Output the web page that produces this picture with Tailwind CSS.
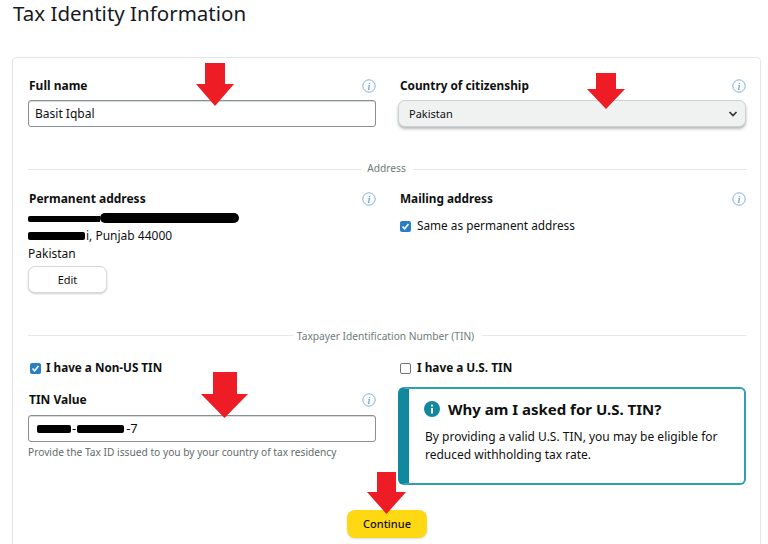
<!DOCTYPE html>
<html lang="en">
<head>
  <meta charset="UTF-8" />
  <title>Tax Identity Information</title>
  <script src="https://cdn.jsdelivr.net/npm/@tailwindcss/browser@4"></script>
</head>
<body class="bg-white text-[#0f1111] font-['Noto_Sans',sans-serif] overflow-hidden">
  <div class="relative h-[544px] w-[768px] overflow-hidden">
    <h1 class="pl-[13px] h-[57px] text-[20.5px] leading-[27px] text-[#16191f]">Tax Identity Information</h1>

    <div class="ml-[12px] w-[749px] h-[520px] border border-[#e4e6e6] rounded-[4px] pl-[15px] pr-[13px] pt-[19px]">
      <!-- name + country -->
      <div class="grid grid-cols-[348px_348px] gap-x-[22px]">
        <div>
          <div class="flex justify-between items-center h-[18px] pl-[1px]">
            <span class="text-[12px] font-bold">Full name</span>
            <svg class="w-[14px] h-[14px]" viewBox="0 0 14 14" fill="none"><circle cx="7" cy="7" r="6.2" stroke="#7fb2dc"/><text x="7" y="10.5" text-anchor="middle" font-size="10" font-style="italic" font-family="Liberation Serif" fill="#2f78ac">i</text></svg>
          </div>
          <div class="mt-[5px] h-[27px] border border-[#8a8f94] rounded-[3px] shadow-[inset_0_1px_1px_#d5d9d9] px-[6px] text-[12px] leading-[26px]">Basit Iqbal</div>
        </div>
        <div>
          <div class="flex justify-between items-center h-[18px] pl-[2px]">
            <span class="text-[11.8px] font-bold">Country of citizenship</span>
            <svg class="w-[14px] h-[14px]" viewBox="0 0 14 14" fill="none"><circle cx="7" cy="7" r="6.2" stroke="#7fb2dc"/><text x="7" y="10.5" text-anchor="middle" font-size="10" font-style="italic" font-family="Liberation Serif" fill="#2f78ac">i</text></svg>
          </div>
          <div class="mt-[5px] h-[27px] border border-[#c9d3d8] rounded-[7px] bg-[#f0f2f2] shadow-[0_2px_3px_rgba(15,17,17,0.3)] pl-[10px] pr-[7px] text-[11px] leading-[26px] flex justify-between items-center">
            <span>Pakistan</span>
            <svg class="w-[10px] h-[8px]" viewBox="0 0 10 8" fill="none"><path d="M1.5 2 L5 5.5 L8.5 2" stroke="#333" stroke-width="1.7"/></svg>
          </div>
        </div>
      </div>

      <!-- address divider -->
      <div class="mt-[33px] flex items-center gap-[6px] h-[18px]">
        <div class="flex-1 border-t border-[#e7e9e9]"></div>
        <span class="text-[10.2px] text-[#6f7b7b] -translate-x-[1px]">Address</span>
        <div class="flex-1 border-t border-[#e7e9e9]"></div>
      </div>

      <!-- addresses -->
      <div class="mt-[12px] grid grid-cols-[348px_348px] gap-x-[22px] h-[136px]">
        <div>
          <div class="flex justify-between items-center h-[18px] pl-[1px]">
            <span class="text-[12px] font-bold">Permanent address</span>
            <svg class="w-[14px] h-[14px]" viewBox="0 0 14 14" fill="none"><circle cx="7" cy="7" r="6.2" stroke="#7fb2dc"/><text x="7" y="10.5" text-anchor="middle" font-size="10" font-style="italic" font-family="Liberation Serif" fill="#2f78ac">i</text></svg>
          </div>
          <div class="mt-[1px] text-[12px] leading-[18px]">
            <div class="h-[18px] flex items-center"><span class="block w-[72px] h-[6px] mt-[2px] bg-black rounded-l-[2px]"></span><span class="block w-[139px] h-[10px] bg-black rounded-[5px]"></span></div>
            <div class="h-[18px] flex items-center"><span class="block w-[57px] h-[8px] bg-black rounded-[2px]"></span><span class="pl-[1px]">i, Punjab 44000</span></div>
            <div class="h-[18px]">Pakistan</div>
          </div>
          <div class="mt-[3px] w-[79px] h-[27px] border border-[#d5d9d9] rounded-[7px] bg-white shadow-[0_1px_2px_rgba(15,17,17,0.2)] text-center text-[11px] leading-[26px]">Edit</div>
        </div>
        <div>
          <div class="flex justify-between items-center h-[18px] pl-[2px]">
            <span class="text-[11.8px] font-bold">Mailing address</span>
            <svg class="w-[14px] h-[14px]" viewBox="0 0 14 14" fill="none"><circle cx="7" cy="7" r="6.2" stroke="#7fb2dc"/><text x="7" y="10.5" text-anchor="middle" font-size="10" font-style="italic" font-family="Liberation Serif" fill="#2f78ac">i</text></svg>
          </div>
          <div class="mt-[10px] flex items-center gap-[6px] pl-[2px] h-[16px]">
            <span class="w-[11px] h-[11px] rounded-[2px] bg-[#2a7fc4] flex items-center justify-center"><svg class="w-[9px] h-[9px]" viewBox="0 0 9 9" fill="none"><path d="M1.5 4.5 L3.6 6.8 L7.5 2" stroke="white" stroke-width="1.5"/></svg></span>
            <span class="text-[11.8px]">Same as permanent address</span>
          </div>
        </div>
      </div>

      <!-- TIN divider -->
      <div class="flex items-center gap-[6px] h-[18px]">
        <div class="flex-1 border-t border-[#e7e9e9]"></div>
        <span class="text-[10.2px] leading-[18px] pt-[2px] text-[#6f7b7b] -translate-x-[2px]">Taxpayer Identification Number (TIN)</span>
        <div class="flex-1 border-t border-[#e7e9e9]"></div>
      </div>

      <!-- TIN -->
      <div class="mt-[16px] grid grid-cols-[348px_348px] gap-x-[22px]">
        <div>
          <div class="flex items-center gap-[5px] pl-[2px] h-[16px]">
            <span class="w-[11px] h-[11px] rounded-[2px] bg-[#2a7fc4] flex items-center justify-center"><svg class="w-[9px] h-[9px]" viewBox="0 0 9 9" fill="none"><path d="M1.5 4.5 L3.6 6.8 L7.5 2" stroke="white" stroke-width="1.5"/></svg></span>
            <span class="text-[11.7px] font-bold">I have a Non-US TIN</span>
          </div>
          <div class="mt-[15px] flex justify-between items-center h-[18px] pl-[1px]">
            <span class="text-[12px] font-bold">TIN Value</span>
            <svg class="w-[14px] h-[14px]" viewBox="0 0 14 14" fill="none"><circle cx="7" cy="7" r="6.2" stroke="#7fb2dc"/><text x="7" y="10.5" text-anchor="middle" font-size="10" font-style="italic" font-family="Liberation Serif" fill="#2f78ac">i</text></svg>
          </div>
          <div class="mt-[6px] h-[27px] border border-[#8a8f94] rounded-[3px] shadow-[inset_0_1px_1px_#d5d9d9] pl-[8px] flex items-center text-[13px]">
            <span class="block w-[34px] h-[8px] bg-black rounded-[2px]"></span><span class="px-[1px]">-</span><span class="block w-[47px] h-[8px] bg-black rounded-[2px]"></span><span class="pl-[2px]">-7</span>
          </div>
          <div class="mt-[2px] text-[10.2px] leading-[16px] text-[#5f6b6b]">Provide the Tax ID issued to you by your country of tax residency</div>
        </div>
        <div>
          <div class="flex items-center gap-[6px] pl-[2px] h-[16px]">
            <span class="w-[11px] h-[11px] rounded-[2px] bg-white border border-[#6f7373]"></span>
            <span class="text-[11.8px] font-bold">I have a U.S. TIN</span>
          </div>
          <div class="mt-[11px] h-[98px] border-2 border-l-[11px] border-[#2f9fb5] border-l-[#12889f] rounded-[6px] pl-[15px] pt-[9px] pr-[10px]">
            <div class="flex items-center gap-[8px]">
              <svg class="w-[16px] h-[16px]" viewBox="0 0 16 16"><circle cx="8" cy="8" r="8" fill="#12889f"/><rect x="7" y="7" width="2" height="5.5" fill="white"/><rect x="7" y="3.6" width="2" height="2" fill="white"/></svg>
              <span class="text-[15px] font-bold">Why am I asked for U.S. TIN?</span>
            </div>
            <p class="mt-[7px] pl-[1px] text-[12px] leading-[18px]">By providing a valid U.S. TIN, you may be eligible for reduced withholding tax rate.</p>
          </div>
        </div>
      </div>
    </div>

    <div class="absolute left-[347px] top-[510px] w-[80px] h-[28px] bg-[#ffd814] rounded-[8px] shadow-[0_1px_2px_rgba(15,17,17,0.15)] text-center text-[11px] font-medium leading-[28px]">Continue</div>

    <!-- red annotation arrows -->
    <svg class="absolute left-[196px] top-[63px]" width="38" height="43" viewBox="0 0 38 43"><path d="M9 0 H29 V21 H38 L19 43 L0 21 H9 Z" fill="#ee1c25"/></svg>
    <svg class="absolute left-[587px] top-[73px]" width="38" height="36" viewBox="0 0 38 36"><path d="M9 0 H29 V16 H38 L19 36 L0 16 H9 Z" fill="#ee1c25"/></svg>
    <svg class="absolute left-[201px] top-[372px]" width="47" height="46" viewBox="0 0 47 46"><path d="M12 0 H36 V22 H47 L23.5 46 L0 22 H12 Z" fill="#ee1c25"/></svg>
    <svg class="absolute left-[367px] top-[472px]" width="39" height="42" viewBox="0 0 39 42"><path d="M10 0 H29 V20 H39 L19.5 42 L0 20 H10 Z" fill="#ee1c25"/></svg>
  </div>
</body>
</html>
